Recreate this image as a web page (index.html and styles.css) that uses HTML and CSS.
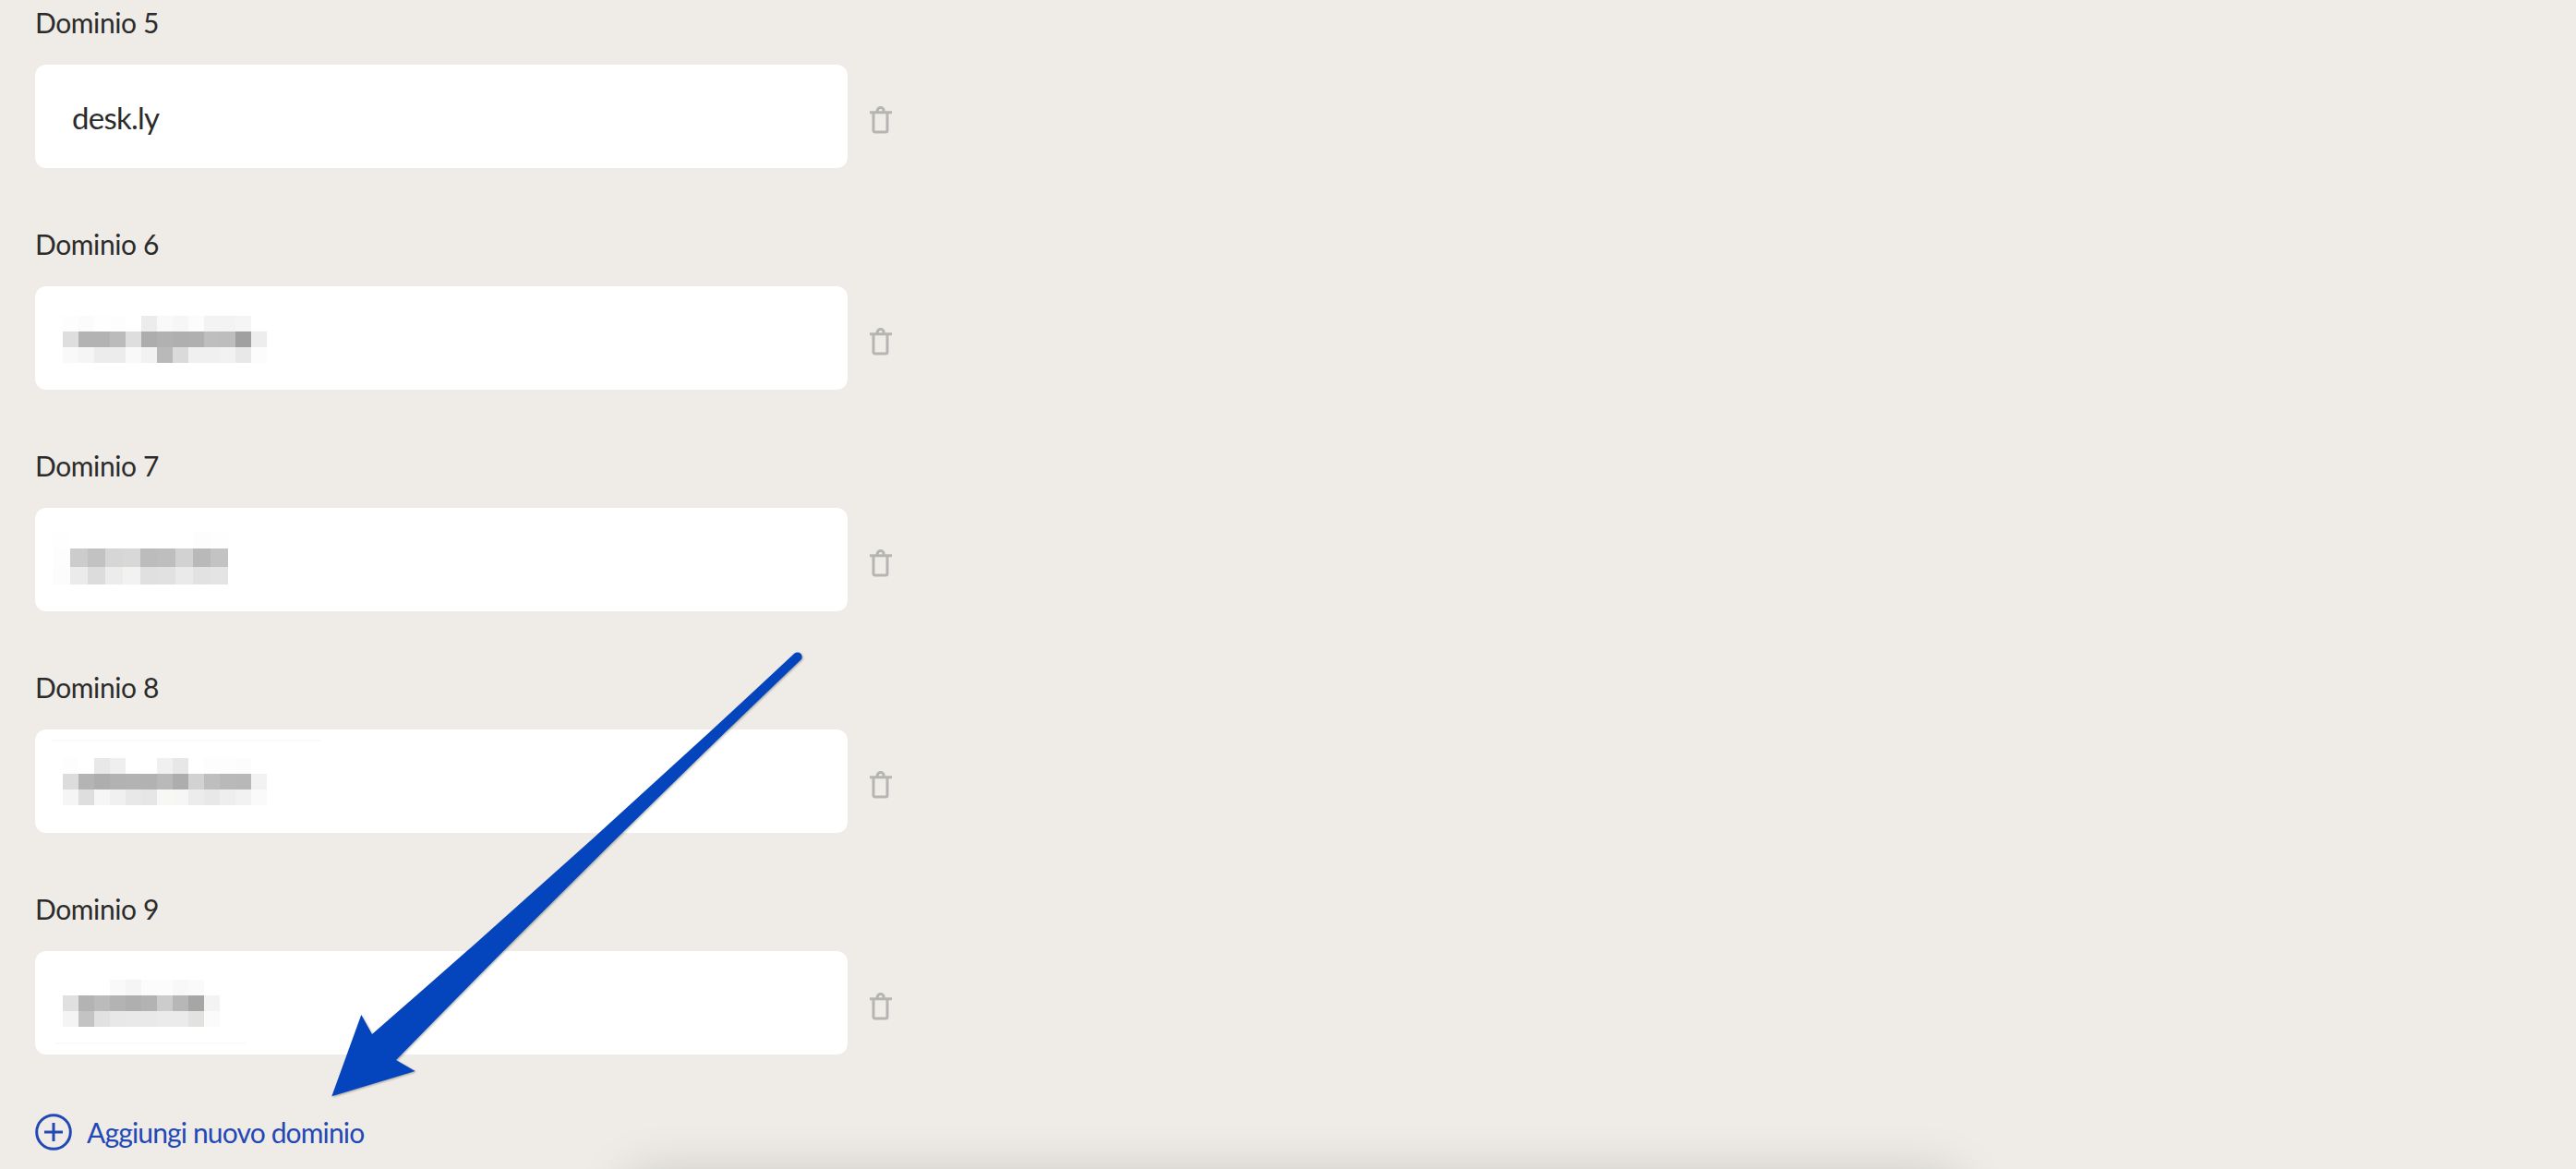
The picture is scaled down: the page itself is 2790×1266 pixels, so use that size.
FILE: index.html
```html
<!DOCTYPE html>
<html lang="it">
<head>
<meta charset="utf-8">
<title>Domini</title>
<link rel="stylesheet" href="styles.css">
</head>
<body>
<main class="page">
  <section class="domain">
    <div class="domain-label">Dominio 5</div>
    <div class="domain-row">
      <div class="field"><span class="field-value">desk.ly</span></div>
      <svg class="trash" viewBox="0 0 26 32"><path class="trash-line" d="M5 6.700V26a2 2 0 0 0 2 2h11a2 2 0 0 0 2-2V6.700M1 6.700h24M9.200 6.700V5a3.500 3.500 0 0 1 7 0v1.700"/></svg>
    </div>
  </section>
  <section class="domain">
    <div class="domain-label">Dominio 6</div>
    <div class="domain-row">
      <div class="field">
        <svg class="mosaic" viewBox="38 310 879 112" shape-rendering="crispEdges">
          <g transform="translate(0 342)">
            <rect x="68" width="17" height="17" fill="#fdfdfd"/><rect x="85" width="17" height="17" fill="#fbfbfb"/><rect x="102" width="17" height="17" fill="#fefefe"/><rect x="119" width="17" height="17" fill="#fdfdfd"/><rect x="153" width="17" height="17" fill="#ececec"/><rect x="170" width="17" height="17" fill="#f9f9f9"/><rect x="187" width="17" height="17" fill="#f6f6f6"/><rect x="204" width="17" height="17" fill="#fcfcfc"/><rect x="221" width="17" height="17" fill="#f3f3f3"/><rect x="238" width="17" height="17" fill="#f3f3f3"/><rect x="255" width="17" height="17" fill="#f5f5f5"/>
          </g>
          <g transform="translate(0 359)">
            <rect x="68" width="17" height="17" fill="#dedede"/><rect x="85" width="17" height="17" fill="#b3b3b3"/><rect x="102" width="17" height="17" fill="#b3b3b3"/><rect x="119" width="17" height="17" fill="#bbbbbb"/><rect x="136" width="17" height="17" fill="#dedede"/><rect x="153" width="17" height="17" fill="#adadad"/><rect x="170" width="17" height="17" fill="#b1b1b1"/><rect x="187" width="17" height="17" fill="#afafaf"/><rect x="204" width="17" height="17" fill="#b0b0b0"/><rect x="221" width="17" height="17" fill="#bebebe"/><rect x="238" width="17" height="17" fill="#bdbdbd"/><rect x="255" width="17" height="17" fill="#a0a0a0"/><rect x="272" width="17" height="17" fill="#ededed"/>
          </g>
          <g transform="translate(0 376)">
            <rect x="68" width="17" height="17" fill="#f9f9f9"/><rect x="85" width="17" height="17" fill="#f5f5f5"/><rect x="102" width="17" height="17" fill="#ececec"/><rect x="119" width="17" height="17" fill="#ececec"/><rect x="136" width="17" height="17" fill="#f9f9f9"/><rect x="153" width="17" height="17" fill="#f2f2f2"/><rect x="170" width="17" height="17" fill="#b9b9b9"/><rect x="187" width="17" height="17" fill="#dadada"/><rect x="204" width="17" height="17" fill="#f0f0f0"/><rect x="221" width="17" height="17" fill="#f0f0f0"/><rect x="238" width="17" height="17" fill="#f2f2f2"/><rect x="255" width="17" height="17" fill="#e8e8e8"/><rect x="272" width="17" height="17" fill="#fcfcfc"/>
          </g>
        </svg>
      </div>
      <svg class="trash" viewBox="0 0 26 32"><path class="trash-line" d="M5 6.700V26a2 2 0 0 0 2 2h11a2 2 0 0 0 2-2V6.700M1 6.700h24M9.200 6.700V5a3.500 3.500 0 0 1 7 0v1.700"/></svg>
    </div>
  </section>
  <section class="domain">
    <div class="domain-label">Dominio 7</div>
    <div class="domain-row">
      <div class="field">
        <svg class="mosaic" viewBox="38 550 879 112" shape-rendering="crispEdges">
          <rect x="57" y="576" width="19" height="57" fill="#fefefe"/>
          <rect x="209" y="576" width="19" height="18" fill="#fdfdfd"/><rect x="228" y="576" width="19" height="18" fill="#fefefe"/>
          <g transform="translate(0 594)">
            <rect x="57" width="19" height="20" fill="#fdfdfd"/><rect x="76" width="19" height="20" fill="#cccccc"/><rect x="95" width="19" height="20" fill="#c2c2c2"/><rect x="114" width="19" height="20" fill="#d6d6d6"/><rect x="133" width="19" height="20" fill="#d8d8d8"/><rect x="152" width="19" height="20" fill="#bcbcbc"/><rect x="171" width="19" height="20" fill="#bebebe"/><rect x="190" width="19" height="20" fill="#d2d2d2"/><rect x="209" width="19" height="20" fill="#b9b9b9"/><rect x="228" width="19" height="20" fill="#c3c3c3"/>
          </g>
          <g transform="translate(0 614)">
            <rect x="57" width="19" height="19" fill="#fcfcfc"/><rect x="76" width="19" height="19" fill="#ebebeb"/><rect x="95" width="19" height="19" fill="#dcdcdc"/><rect x="114" width="19" height="19" fill="#ececec"/><rect x="133" width="19" height="19" fill="#f2f2f0"/><rect x="152" width="19" height="19" fill="#e0e0e0"/><rect x="171" width="19" height="19" fill="#e1e1e1"/><rect x="190" width="19" height="19" fill="#eaeaea"/><rect x="209" width="19" height="19" fill="#e2e2e2"/><rect x="228" width="19" height="19" fill="#e4e4e4"/>
          </g>
        </svg>
      </div>
      <svg class="trash" viewBox="0 0 26 32"><path class="trash-line" d="M5 6.700V26a2 2 0 0 0 2 2h11a2 2 0 0 0 2-2V6.700M1 6.700h24M9.200 6.700V5a3.500 3.500 0 0 1 7 0v1.700"/></svg>
    </div>
  </section>
  <section class="domain">
    <div class="domain-label">Dominio 8</div>
    <div class="domain-row">
      <div class="field">
        <svg class="mosaic" viewBox="38 790 879 112" shape-rendering="crispEdges">
          <rect x="55" y="801" width="293" height="2" fill="#fbfafa"/>
          <g transform="translate(0 821)">
            <rect x="68" width="17" height="17" fill="#fdfdfd"/><rect x="102" width="17" height="17" fill="#e8e8e8"/><rect x="119" width="17" height="17" fill="#efefef"/><rect x="170" width="17" height="17" fill="#f0f0f0"/><rect x="187" width="17" height="17" fill="#e7e7e7"/><rect x="221" width="17" height="17" fill="#fdfdfd"/><rect x="238" width="17" height="17" fill="#fdfdfd"/><rect x="255" width="17" height="17" fill="#fcfcfc"/>
          </g>
          <g transform="translate(0 838)">
            <rect x="68" width="17" height="17" fill="#dcdcdc"/><rect x="85" width="17" height="17" fill="#b4b4b4"/><rect x="102" width="17" height="17" fill="#aeaeae"/><rect x="119" width="17" height="17" fill="#b2b2b2"/><rect x="136" width="17" height="17" fill="#b3b3b3"/><rect x="153" width="17" height="17" fill="#b2b2b2"/><rect x="170" width="17" height="17" fill="#b9b9b9"/><rect x="187" width="17" height="17" fill="#adadad"/><rect x="204" width="17" height="17" fill="#d2d2d2"/><rect x="221" width="17" height="17" fill="#bebebe"/><rect x="238" width="17" height="17" fill="#b9b9b9"/><rect x="255" width="17" height="17" fill="#b8b8b8"/><rect x="272" width="17" height="17" fill="#f2f2f2"/>
          </g>
          <g transform="translate(0 855)">
            <rect x="68" width="17" height="17" fill="#f5f5f5"/><rect x="85" width="17" height="17" fill="#dedede"/><rect x="102" width="17" height="17" fill="#f6f6f6"/><rect x="119" width="17" height="17" fill="#f0f0f0"/><rect x="136" width="17" height="17" fill="#e8e8e8"/><rect x="153" width="17" height="17" fill="#e6e6e6"/><rect x="170" width="17" height="17" fill="#f7f7f6"/><rect x="187" width="17" height="17" fill="#f6f6f5"/><rect x="204" width="17" height="17" fill="#ececec"/><rect x="221" width="17" height="17" fill="#e8e8e8"/><rect x="238" width="17" height="17" fill="#eeeeee"/><rect x="255" width="17" height="17" fill="#f2f2f2"/><rect x="272" width="17" height="17" fill="#fafafa"/>
          </g>
        </svg>
      </div>
      <svg class="trash" viewBox="0 0 26 32"><path class="trash-line" d="M5 6.700V26a2 2 0 0 0 2 2h11a2 2 0 0 0 2-2V6.700M1 6.700h24M9.200 6.700V5a3.500 3.500 0 0 1 7 0v1.700"/></svg>
    </div>
  </section>
  <section class="domain">
    <div class="domain-label">Dominio 9</div>
    <div class="domain-row">
      <div class="field">
        <svg class="mosaic" viewBox="38 1030 879 112" shape-rendering="crispEdges">
          <rect x="60" y="1129" width="206" height="2" fill="#fafafa"/>
          <g transform="translate(0 1061)">
            <rect x="119" width="17" height="17" fill="#f9f9f9"/><rect x="136" width="17" height="17" fill="#f5f5f5"/><rect x="153" width="17" height="17" fill="#fbfcfb"/><rect x="170" width="17" height="17" fill="#fcfcfc"/><rect x="187" width="17" height="17" fill="#f8f8f8"/><rect x="204" width="17" height="17" fill="#fafafa"/>
          </g>
          <g transform="translate(0 1078)">
            <rect x="68" width="17" height="17" fill="#e0e0e0"/><rect x="85" width="17" height="17" fill="#b3b3b3"/><rect x="102" width="17" height="17" fill="#bbbbbb"/><rect x="119" width="17" height="17" fill="#b3b3b3"/><rect x="136" width="17" height="17" fill="#afafaf"/><rect x="153" width="17" height="17" fill="#b3b3b3"/><rect x="170" width="17" height="17" fill="#cccccc"/><rect x="187" width="17" height="17" fill="#b7b7b7"/><rect x="204" width="17" height="17" fill="#a6a6a6"/><rect x="221" width="17" height="17" fill="#f3f3f3"/>
          </g>
          <g transform="translate(0 1095)">
            <rect x="68" width="17" height="17" fill="#f4f4f4"/><rect x="85" width="17" height="17" fill="#c3c3c3"/><rect x="102" width="17" height="17" fill="#e1e1e1"/><rect x="119" width="17" height="17" fill="#e8e8e8"/><rect x="136" width="17" height="17" fill="#e9e9e9"/><rect x="153" width="17" height="17" fill="#e9e9e9"/><rect x="170" width="17" height="17" fill="#ebebeb"/><rect x="187" width="17" height="17" fill="#ebebeb"/><rect x="204" width="17" height="17" fill="#e2e2e0"/><rect x="221" width="17" height="17" fill="#fbfbfb"/>
          </g>
        </svg>
      </div>
      <svg class="trash" viewBox="0 0 26 32"><path class="trash-line" d="M5 6.700V26a2 2 0 0 0 2 2h11a2 2 0 0 0 2-2V6.700M1 6.700h24M9.200 6.700V5a3.500 3.500 0 0 1 7 0v1.700"/></svg>
    </div>
  </section>
  <div class="add-domain">
    <svg class="add-icon" viewBox="0 0 40 40"><circle class="add-line" cx="20" cy="20" r="18.300"/><path class="add-line" d="M10 20h20M20 10v20"/></svg>
    <span class="add-text">Aggiungi nuovo dominio</span>
  </div>
</main>
<div class="footer-clip"><div class="footer-shadow"></div></div>
<svg class="arrow" viewBox="0 0 2790 1266"><path class="arrow-shape" d="M860.500 707.500 Q864 705.500 867.500 708 Q869.500 711 868 714 Q644.500 927 429 1148 L449.700 1160 L359.300 1187.300 L391.300 1099 L403 1120 Q635.750 917.750 860.500 707.500 Z"/></svg>
</body>
</html>
```
FILE: styles.css
```css
html, body {
  margin: 0;
  height: 100%;
  overflow: hidden;
  background: #efece7;
}
.page {
  display: flex;
  flex-direction: column;
  gap: 62px;
  padding: 4px 0 0 38px;
  font-family: Lato, "Noto Sans", sans-serif;
  color: #2b2b2b;
}
.domain-label {
  font-size: 30px;
  line-height: 40px;
  letter-spacing: -0.4px;
  margin-bottom: 26px;
}
.domain-row {
  display: flex;
  align-items: center;
  gap: 23px;
}
.field {
  width: 880px;
  height: 112px;
  background: #fff;
  border-radius: 12px;
  overflow: hidden;
  display: flex;
  align-items: center;
  box-sizing: border-box;
}
.field-value {
  padding: 2px 0 0 40px;
  font-size: 33px;
  letter-spacing: -0.75px;
}
.mosaic {
  display: block;
  flex: none;
  width: 879px;
  height: 112px;
}
.trash {
  width: 26px;
  height: 32px;
  margin-top: 10px;
}
.trash-line {
  fill: none;
  stroke: #b5b5b3;
  stroke-width: 3;
}
.add-domain {
  display: flex;
  align-items: center;
  gap: 16px;
  margin-top: 2px;
  color: #2348b6;
  font-size: 30px;
  line-height: 40px;
  letter-spacing: -0.85px;
}
.add-icon {
  width: 40px;
  height: 40px;
}
.add-line {
  fill: none;
  stroke: #2348b6;
  stroke-width: 3;
}
.footer-clip {
  position: absolute;
  left: 0;
  right: 0;
  bottom: 0;
  height: 90px;
  overflow: hidden;
}
.footer-shadow {
  position: absolute;
  left: 680px;
  top: 100px;
  width: 1440px;
  height: 60px;
  border-radius: 20px;
  box-shadow: 0 0 60px rgba(0, 0, 0, 0.19);
}
.arrow {
  position: absolute;
  left: 0;
  top: 0;
  width: 2790px;
  height: 1266px;
  filter: drop-shadow(1px 1.500px 1px rgba(0, 0, 0, 0.3));
}
.arrow-shape {
  fill: #0445bd;
}
```
